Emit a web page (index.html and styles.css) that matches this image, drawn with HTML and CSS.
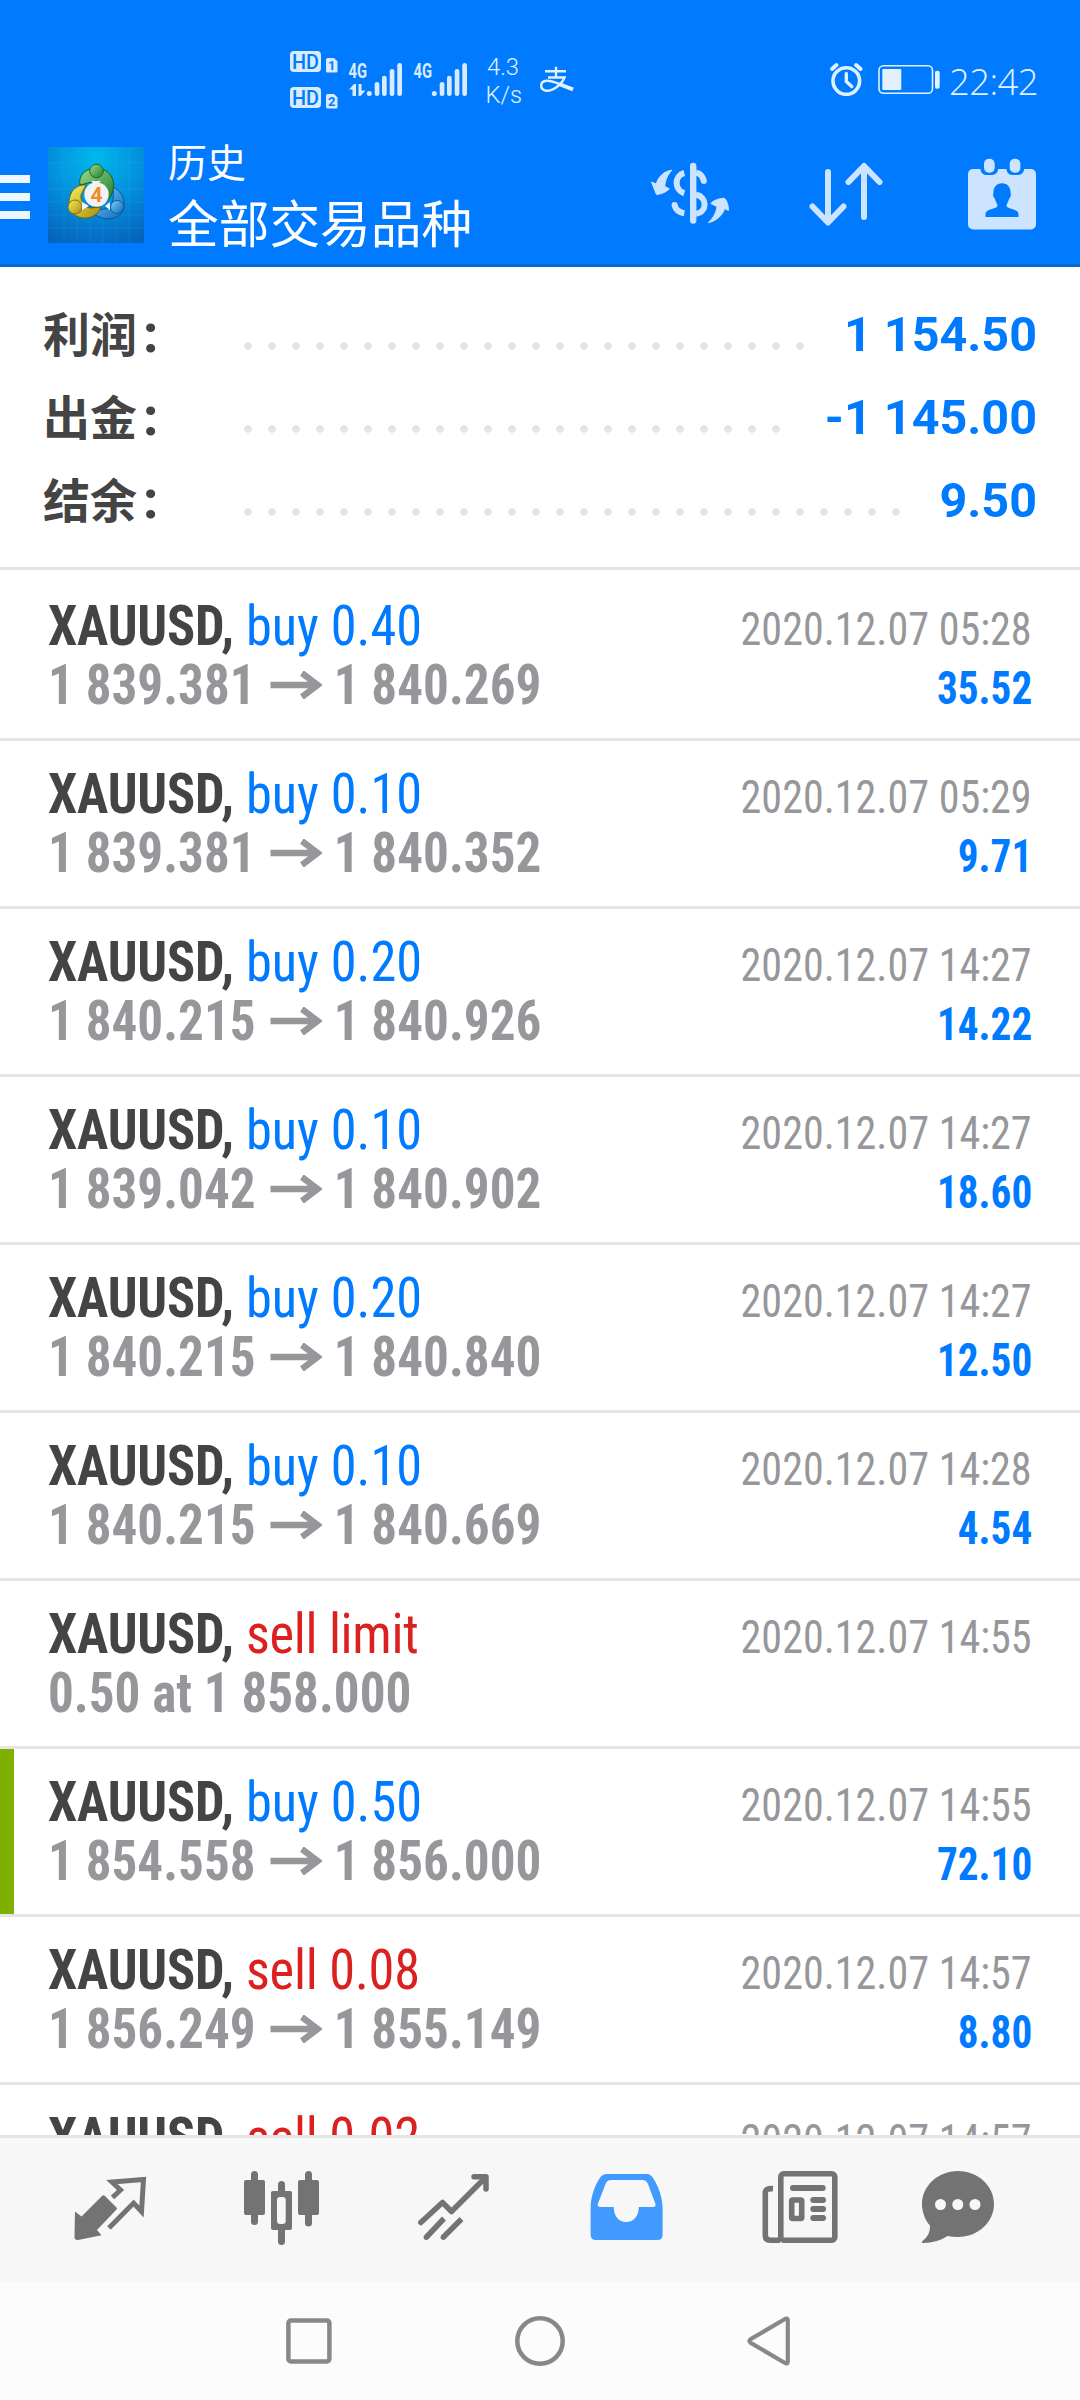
FILE: index.html
```html
<!DOCTYPE html>
<html lang="zh-CN">
<head>
<meta charset="utf-8">
<title>历史</title>
<link rel="stylesheet" href="styles.css">
</head>
<body>
<div class="screen">
  <header class="top">
    <div class="status">
      <svg class="status-left" width="300" height="66" viewBox="285 48 300 66">
        <g fill="#d9ecff">
          <rect x="290" y="51" width="31" height="21" rx="4"/>
          <rect x="290" y="87" width="31" height="21" rx="4"/>
          <path d="M326 59.500q0-1.500 1.500-1.500h6.500l3.500 3.500v9.500q0 1.500-1.500 1.500h-8.500q-1.500 0-1.500-1.500z"/>
          <path d="M326 95.500q0-1.500 1.500-1.500h6.500l3.500 3.500v9.500q0 1.500-1.500 1.500h-8.500q-1.500 0-1.500-1.500z"/>
          <text class="net" x="348.500" y="78" textLength="18.500" lengthAdjust="spacingAndGlyphs">4G</text>
          <text class="net" x="413.500" y="78" textLength="18.500" lengthAdjust="spacingAndGlyphs">4G</text>
          <path d="M349 89.500l5-5.500h2v12h-3.500v-6.500zM358.500 84h3v6.500h4l-5 5.500h-2z"/>
          <g id="bars">
            <circle cx="369.300" cy="93.500" r="2.500"/>
            <rect x="374.700" y="82" width="4.700" height="14" rx="2.300"/>
            <rect x="382" y="75.700" width="4.700" height="20.300" rx="2.300"/>
            <rect x="389.700" y="69" width="4.700" height="27" rx="2.300"/>
            <rect x="397.300" y="63" width="4.700" height="33" rx="2.300"/>
          </g>
          <use href="#bars" x="65"/>
        </g>
        <g fill="#007aff">
          <text class="hd" x="292" y="68.800" textLength="27" lengthAdjust="spacingAndGlyphs">HD</text>
          <text class="hd" x="292" y="104.800" textLength="27" lengthAdjust="spacingAndGlyphs">HD</text>
          <text class="sim" x="328" y="70">1</text>
          <text class="sim" x="328" y="106">2</text>
        </g>
        <g class="speed" fill="#e3f1ff">
          <text x="487" y="75.300" textLength="32" lengthAdjust="spacingAndGlyphs">4.3</text>
          <text x="485.500" y="103" textLength="36.500" lengthAdjust="spacingAndGlyphs">K/s</text>
        </g>
        <g fill="none" stroke="#e3f1ff" stroke-width="2.400">
          <path d="M545 71.300h21M556 66.700v11M548 77.500h16.500C561.500 85 552 91.500 546 90.700C539.500 89.500 539.500 81.500 546.500 80.800C553 80.500 561 85 573 89"/>
          <path d="M559 84L573 89.500" stroke-width="4"/>
        </g>
      </svg>
      <svg class="status-right" width="116" height="36" viewBox="828 60 116 36">
        <g fill="none" stroke="#dff0ff">
          <circle cx="846.300" cy="81" r="13.300" stroke-width="3.600"/>
          <path d="M846.300 73.500v8l5.500 5" stroke-width="3.400" stroke-linecap="round"/>
          <path d="M832 69l4.500-4M860.600 69l-4.500-4" stroke-width="4" stroke-linecap="round"/>
          <rect x="879" y="65.700" width="53.500" height="27.500" rx="4.500" stroke-width="1.600"/>
        </g>
        <rect x="882.300" y="69" width="19" height="21" rx="1" fill="#e3f1ff"/>
        <rect x="935" y="70.700" width="4.700" height="18" rx="2" fill="#e3f1ff"/>
      </svg>
      <span class="clock">22:42</span>
    </div>
    <div class="bar">
      <div class="menu"><i></i><i></i><i></i></div>
      <svg class="app" width="96" height="96" viewBox="0 0 96 96">
        <defs>
          <radialGradient id="bg" cx="50%" cy="12%" r="95%"><stop offset="0" stop-color="#00b9ee"/><stop offset=".5" stop-color="#0390dc"/><stop offset="1" stop-color="#0563bd"/></radialGradient>
          <linearGradient id="gr" x1="0" y1="0" x2="1" y2="1"><stop offset="0" stop-color="#9bdc8a"/><stop offset="1" stop-color="#1d7d2e"/></linearGradient>
          <linearGradient id="ye" x1="0" y1="0" x2="1" y2="1"><stop offset="0" stop-color="#f6ee5e"/><stop offset="1" stop-color="#a88c10"/></linearGradient>
          <linearGradient id="bl" x1="0" y1="0" x2="1" y2="1"><stop offset="0" stop-color="#7fd0fa"/><stop offset="1" stop-color="#0c68bc"/></linearGradient>
        </defs>
        <rect width="96" height="96" fill="url(#bg)"/>
        <path d="M16 0v96M29 0v96M42 0v96M55 0v96M68 0v96M81 0v96M0 16h96M0 29h96M0 42h96M0 55h96M0 68h96M0 81h96" stroke="#5fc4f5" stroke-opacity=".13"/>
        <g stroke-width="1">
          <path d="M64 40C72 42 77 51 76 60C75 68 68 72 59 72C50 71 43 66 41 59C48 63 58 64 62 59C66 54 66 46 64 40z" fill="url(#bl)" stroke="#075699"/>
          <path d="M38 38C28 37 20 45 21 59C22 67 31 72 39 71C46 70 51 66 53 60L43 61C37 61 32 54 33 48z" fill="url(#ye)" stroke="#6b620d"/>
          <path d="M32 38C30 28 38 21 48 21C59 21 68 30 65 43C64 48 61 53 58 54L56 38L48 34L36 37z" fill="url(#gr)" stroke="#155f23"/>
          <path d="M43 34h10l-5 5z" fill="#f4fbef"/>
          <circle cx="48.500" cy="24" r="6.800" fill="url(#gr)" stroke="#1a6a27"/>
          <circle cx="27" cy="60" r="7" fill="url(#ye)" stroke="#80700f"/>
          <circle cx="69" cy="60" r="6.500" fill="url(#bl)" stroke="#0a5ca6"/>
          <path d="M34 55l7 4-7 4zM62 55l-5 4 5 4z" fill="#eef6ff"/>
        </g>
        <circle cx="48.500" cy="47.500" r="12.200" fill="#f3f3f5"/>
        <text class="four" x="48.500" y="55" text-anchor="middle">4</text>
      </svg>
      <div class="titles">
        <div class="title">历史</div>
        <div class="subtitle">全部交易品种</div>
      </div>
      <svg class="act-money" width="80" height="64" viewBox="650 161 80 64">
        <g fill="none" stroke="#cce4ff" stroke-width="6">
          <path d="M693.200 166v54.500" stroke-width="6.400" stroke-linecap="round"/>
          <path d="M684.300 173C674 175.500 674 190 684.300 193.300M684.300 213.300C679 212.500 675.500 209 674.500 205"/>
          <path d="M696 172.500C700 173.500 703 176.500 703.800 181M696 194.500C707.500 197 707.500 212 696 213.800"/>
        </g>
        <circle cx="674.600" cy="205" r="3" fill="#cce4ff"/><circle cx="703.800" cy="181" r="3" fill="#cce4ff"/>
        <path fill="#cce4ff" stroke="#cce4ff" stroke-width="1" stroke-linejoin="round" d="M672 170.200C664 171 658 177 656.300 184L651.500 182L656.500 194.500C662 194 667 191.500 669.300 188.800L664.800 186.500C665 181 667.500 174.500 672 170.200zM708.300 222.500C716 221.500 723 215 724.500 208.500L728.500 210.500C728.500 206 727 200.500 724.500 198.300C720 198 713 200.500 710.800 203.500L717 206.500C716.500 212 713.500 218 708.300 222.500z"/>
      </svg>
      <svg class="act-sort" width="80" height="68" viewBox="806 160 80 68">
        <path d="M828 172v50M812.500 206.500l15.500 16 15.500-16M864 217v-50M848.500 182l15.500-16 15.500 16" fill="none" stroke="#cce4ff" stroke-width="6" stroke-linecap="round" stroke-linejoin="round"/>
      </svg>
      <svg class="act-cal" width="68" height="72" viewBox="968 158 68 72">
        <rect x="968" y="169" width="68" height="60.500" rx="5" fill="#cce4ff"/>
        <path d="M980.500 168v2q1 5 6.500 5h4q6 0 7-5v-2zM1006.500 168v2q1 5 6.500 5h4q6 0 7-5v-2z" fill="#007aff"/>
        <rect x="984" y="158.700" width="10.700" height="14" rx="5" fill="#cce4ff"/>
        <rect x="1009.700" y="158.700" width="10.700" height="14" rx="5" fill="#cce4ff"/>
        <path d="M1002 183.200C1008 183.200 1011 188 1010.500 193C1011.500 195 1010.500 197.500 1009 199C1008.500 202 1006.500 203.500 1006.500 206C1007.500 209.500 1018.500 208.500 1018.500 214V217H985.500V214C985.500 208.500 996.500 209.500 997.500 206C997.500 203.500 995.500 202 995 199C993.500 197.500 992.500 195 993.500 193C993 188 996 183.200 1002 183.200z" fill="#007aff"/>
      </svg>
    </div>
  </header>

  <section class="summary">
    <div class="sum"><b class="label">利润<i>:</i></b><span class="dots"></span><b class="value">1 154.50</b></div>
    <div class="sum"><b class="label">出金<i>:</i></b><span class="dots"></span><b class="value">-1 145.00</b></div>
    <div class="sum"><b class="label">结余<i>:</i></b><span class="dots"></span><b class="value">9.50</b></div>
  </section>

  <main class="list">
    <article class="deal"><div class="line"><span class="what"><b>XAUUSD,</b> <span class="buy">buy 0.40</span></span><time>2020.12.07 05:28</time></div><div class="line"><span class="price">1 839.381<svg class="arrow" viewBox="0 0 56 28"><path d="M0 14h51M34 2l17 12-17 12"/></svg>1 840.269</span><b class="gain">35.52</b></div></article>
    <article class="deal"><div class="line"><span class="what"><b>XAUUSD,</b> <span class="buy">buy 0.10</span></span><time>2020.12.07 05:29</time></div><div class="line"><span class="price">1 839.381<svg class="arrow" viewBox="0 0 56 28"><path d="M0 14h51M34 2l17 12-17 12"/></svg>1 840.352</span><b class="gain">9.71</b></div></article>
    <article class="deal"><div class="line"><span class="what"><b>XAUUSD,</b> <span class="buy">buy 0.20</span></span><time>2020.12.07 14:27</time></div><div class="line"><span class="price">1 840.215<svg class="arrow" viewBox="0 0 56 28"><path d="M0 14h51M34 2l17 12-17 12"/></svg>1 840.926</span><b class="gain">14.22</b></div></article>
    <article class="deal"><div class="line"><span class="what"><b>XAUUSD,</b> <span class="buy">buy 0.10</span></span><time>2020.12.07 14:27</time></div><div class="line"><span class="price">1 839.042<svg class="arrow" viewBox="0 0 56 28"><path d="M0 14h51M34 2l17 12-17 12"/></svg>1 840.902</span><b class="gain">18.60</b></div></article>
    <article class="deal"><div class="line"><span class="what"><b>XAUUSD,</b> <span class="buy">buy 0.20</span></span><time>2020.12.07 14:27</time></div><div class="line"><span class="price">1 840.215<svg class="arrow" viewBox="0 0 56 28"><path d="M0 14h51M34 2l17 12-17 12"/></svg>1 840.840</span><b class="gain">12.50</b></div></article>
    <article class="deal"><div class="line"><span class="what"><b>XAUUSD,</b> <span class="buy">buy 0.10</span></span><time>2020.12.07 14:28</time></div><div class="line"><span class="price">1 840.215<svg class="arrow" viewBox="0 0 56 28"><path d="M0 14h51M34 2l17 12-17 12"/></svg>1 840.669</span><b class="gain">4.54</b></div></article>
    <article class="deal"><div class="line"><span class="what"><b>XAUUSD,</b> <span class="sell limit">sell limit</span></span><time>2020.12.07 14:55</time></div><div class="line"><span class="price">0.50 at 1 858.000</span></div></article>
    <article class="deal marked"><div class="line"><span class="what"><b>XAUUSD,</b> <span class="buy">buy 0.50</span></span><time>2020.12.07 14:55</time></div><div class="line"><span class="price">1 854.558<svg class="arrow" viewBox="0 0 56 28"><path d="M0 14h51M34 2l17 12-17 12"/></svg>1 856.000</span><b class="gain">72.10</b></div></article>
    <article class="deal"><div class="line"><span class="what"><b>XAUUSD,</b> <span class="sell">sell 0.08</span></span><time>2020.12.07 14:57</time></div><div class="line"><span class="price">1 856.249<svg class="arrow" viewBox="0 0 56 28"><path d="M0 14h51M34 2l17 12-17 12"/></svg>1 855.149</span><b class="gain">8.80</b></div></article>
    <article class="deal"><div class="line"><span class="what"><b>XAUUSD,</b> <span class="sell">sell 0.02</span></span><time>2020.12.07 14:57</time></div></article>
  </main>

  <nav class="tabs">
    <svg width="76" height="76" viewBox="72 2169 76 76">
      <path d="M75 2211.500L81.500 2216.500L102 2196Q103.500 2194.500 105 2196L116.500 2207.500Q117.500 2208.500 116.500 2209.500L97 2230L101.500 2235.200L78 2240Q74.500 2240.200 74.500 2237z" fill="#737373"/>
      <path d="M112.500 2197.500L120.500 2190L112 2182L143.500 2179.500L141.500 2211.500L133.600 2203L109 2228" fill="none" stroke="#737373" stroke-width="5" stroke-linejoin="miter"/>
    </svg>
    <svg width="76" height="76" viewBox="244 2169 76 76">
      <g fill="#737373">
        <rect x="244" y="2180" width="21" height="35" rx="2"/><rect x="251" y="2171" width="7" height="54" rx="3.500"/>
        <rect x="298" y="2180" width="21" height="35" rx="2"/><rect x="305" y="2171" width="7" height="55.500" rx="3.500"/>
        <rect x="278" y="2181" width="7" height="64" rx="3.500"/><rect x="271" y="2191" width="21" height="39" rx="2"/>
      </g>
      <rect x="277" y="2197" width="8.700" height="27" rx="3" fill="#f7f7f7"/>
    </svg>
    <svg width="76" height="76" viewBox="416 2169 76 76">
      <g fill="none" stroke="#737373" stroke-width="5.500" stroke-linecap="round" stroke-linejoin="round">
        <path d="M420.800 2222.500L442.500 2202.500L451.500 2211.500L485 2178"/>
        <path d="M474 2176.800H486V2189"/>
      </g>
      <path d="M444 2218.500L426.500 2237M461.500 2219L443.500 2237" fill="none" stroke="#737373" stroke-width="5.500"/>
      <circle cx="426.300" cy="2237.200" r="2.700" fill="#737373"/><circle cx="443.300" cy="2237.200" r="2.700" fill="#737373"/>
    </svg>
    <svg width="76" height="76" viewBox="588 2169 76 76">
      <path fill="#419bff" fill-rule="evenodd" d="M606 2174H647.500Q650 2174 652 2176.500C659 2186 662.600 2199 662.600 2208V2234.500Q662.600 2240 657.500 2240H596Q590.600 2240 590.600 2234.500V2208C590.600 2197 595 2184 601 2176.500Q603 2174 606 2174zM611 2180Q607 2180 605.500 2184L598 2203.500Q597 2207 600.500 2207H613.700C613.700 2216 619 2222 626.200 2222C633.500 2222 638.800 2216 638.800 2207H652.500Q656.500 2207 655.300 2203.500L648 2184Q646.500 2180 642 2180z"/>
    </svg>
    <svg width="76" height="76" viewBox="762 2169 76 76">
      <g fill="none" stroke="#737373" stroke-width="5.600">
        <rect x="780.800" y="2173.800" width="54" height="66.400" rx="3"/>
        <path d="M773 2188.700Q765.300 2188 765.300 2193V2235Q765.300 2240.200 770 2240.200H780"/>
        <rect x="791.700" y="2200" width="10" height="18.500" rx="1"/>
      </g>
      <g fill="#737373"><rect x="790" y="2185" width="35.700" height="6" rx="3"/><rect x="810.300" y="2197" width="15.700" height="6" rx="3"/><rect x="810.300" y="2206" width="15.700" height="6" rx="3"/><rect x="810.300" y="2215" width="15.700" height="6" rx="3"/></g>
    </svg>
    <svg width="76" height="76" viewBox="920 2169 76 76">
      <path fill="#737373" d="M958 2171C978 2171 994 2186 994 2204C994 2222 978 2237 958 2237Q952.500 2237 947.500 2236Q937 2243 923.500 2243Q921 2243 922.500 2241Q930.500 2235.500 930 2225.600C925 2220 922 2212 922 2204C922 2186 938 2171 958 2171z"/>
      <g fill="#f7f7f7"><circle cx="940.500" cy="2204.500" r="5.500"/><circle cx="957.800" cy="2204.500" r="5.500"/><circle cx="975" cy="2204.500" r="5.500"/></g>
    </svg>
  </nav>

  <footer class="system">
    <svg width="50" height="54" viewBox="284 2314 50 54"><rect x="288.400" y="2320.600" width="41" height="40.800" rx="2.500" fill="none" stroke="#888" stroke-width="4.500"/></svg>
    <svg class="home" width="54" height="54" viewBox="513 2314 54 54"><circle cx="540" cy="2341" r="22.700" fill="none" stroke="#888" stroke-width="4.500"/></svg>
    <svg width="50" height="54" viewBox="744 2314 50 54"><path d="M787.800 2320.500Q787.800 2317.500 785 2319L750.500 2339.300Q748.300 2341 750.500 2342.700L785 2363Q787.800 2364.500 787.800 2361.500z" fill="none" stroke="#888" stroke-width="4.200"/></svg>
  </footer>
</div>
</body>
</html>
```
FILE: styles.css
```css
* { box-sizing: border-box; }
body {
  margin: 0;
  background: #fff;
  font-family: Roboto, "Noto Sans CJK SC", sans-serif;
}
svg { display: block; flex: none; }
.screen {
  width: 1080px;
  height: 2400px;
  display: flex;
  flex-direction: column;
  overflow: hidden;
}

/* header */
.top {
  height: 267px;
  flex: none;
  background: #007aff;
  border-bottom: 3px solid #0f69c9;
}
.status {
  height: 130px;
  display: flex;
  align-items: flex-start;
}
.status-left { margin: 48px 0 0 285px; }
.status-right { margin: 60px 0 0 243px; }
.clock {
  margin: 60px 0 0 5px;
  font: 300 36.500px/42px "Open Sans", "Noto Sans", sans-serif;
  letter-spacing: -0.600px;
  color: #e3f1ff;
}
.net { font: 700 20px Roboto, sans-serif; }
.hd { font: 500 19.500px Roboto, sans-serif; }
.sim { font: 700 13px Roboto, sans-serif; }
.speed { font: 350 24.500px Roboto, sans-serif; }
.four { font: 700 21px Roboto, sans-serif; fill: #f08a2c; }
.bar {
  height: 134px;
  display: flex;
  align-items: flex-start;
}
.menu {
  width: 30px;
  margin-top: 45px;
  display: flex;
  flex-direction: column;
  gap: 10px;
}
.menu i { height: 8px; background: #eef6ff; }
.app { margin: 17px 0 0 18px; }
.titles {
  width: 330px;
  margin: 1px 0 0 24px;
  color: #fff;
  font-family: "Noto Sans CJK SC", sans-serif;
}
.title { font-size: 39px; line-height: 58px; }
.subtitle { font-size: 50.700px; line-height: 64px; }
.act-money { margin: 31px 0 0 152px; }
.act-sort { margin: 30px 0 0 76px; }
.act-cal { margin: 28px 0 0 82px; }

/* account totals */
.summary {
  height: 303px;
  flex: none;
  padding: 26px 43px 0;
  border-bottom: 3px solid #e5e5e5;
}
.sum {
  height: 83px;
  display: flex;
  line-height: 83px;
  font-size: 48.500px;
}
.label {
  width: 193px;
  margin-top: -3px;
  color: #444;
  font-family: "Noto Sans CJK SC", sans-serif;
  font-size: 47px;
}
.label i {
  font: 800 53px/1 Roboto, sans-serif;
  margin-left: 6px;
}
.dots {
  flex: 1;
  height: 8px;
  margin: 49px 32px 0 0;
  background: radial-gradient(circle at 12px 4px, #e4e4e4 3.400px, transparent 4.200px) 0 0 / 24px 8px repeat-x;
}
.value { color: #007aff; }

/* deals */
.list {
  height: 1565px;
  flex: none;
  padding-top: 3px;
  overflow: hidden;
  font-stretch: 75%;
  font-family: "Roboto Condensed", Roboto, sans-serif;
}
.deal {
  height: 168px;
  padding: 24px 48px 0;
  border-bottom: 3px solid #e5e5e5;
}
.marked { box-shadow: inset 14px 0 #7fb000; }
.line {
  height: 59px;
  display: flex;
  justify-content: space-between;
  align-items: baseline;
  line-height: 59px;
  white-space: nowrap;
  font-size: 55px;
}
.what { transform: scaleX(0.951); transform-origin: left; }
.what b { color: #444; letter-spacing: -0.200px; }
.buy, .gain { color: #007aff; }
.sell { color: #db2020; letter-spacing: -0.200px; }
.limit { letter-spacing: -0.300px; }
time {
  color: #96979b;
  font-size: 45.500px;
  transform: scaleX(0.925);
  transform-origin: right;
}
.gain {
  font-size: 45.500px;
  transform: scaleX(0.905);
  transform-origin: right;
}
.price {
  color: #96979b;
  font-weight: 700;
  transform: scaleX(0.93);
  transform-origin: left;
}
.arrow {
  display: inline-block;
  width: 56px;
  height: 28px;
  margin: 0 12px 5px 16px;
}
.arrow path { fill: none; stroke: #96979b; stroke-width: 6.500px; }

/* bottom tabs */
.tabs {
  height: 147px;
  flex: none;
  display: flex;
  padding: 31px 0 0 72px;
  border-top: 3px solid #e5e5e5;
  background: #f7f7f7;
  gap: 96px;
}
.tabs svg:nth-child(5) { margin-left: 2px; }
.tabs svg:nth-child(6) { margin-left: -14px; }

/* system navigation */
.system {
  height: 118px;
  flex: none;
  display: flex;
  justify-content: space-between;
  padding: 32px 286px 0 284px;
  background: #fcfcfc;
}
.home { margin-left: 2px; }
```
